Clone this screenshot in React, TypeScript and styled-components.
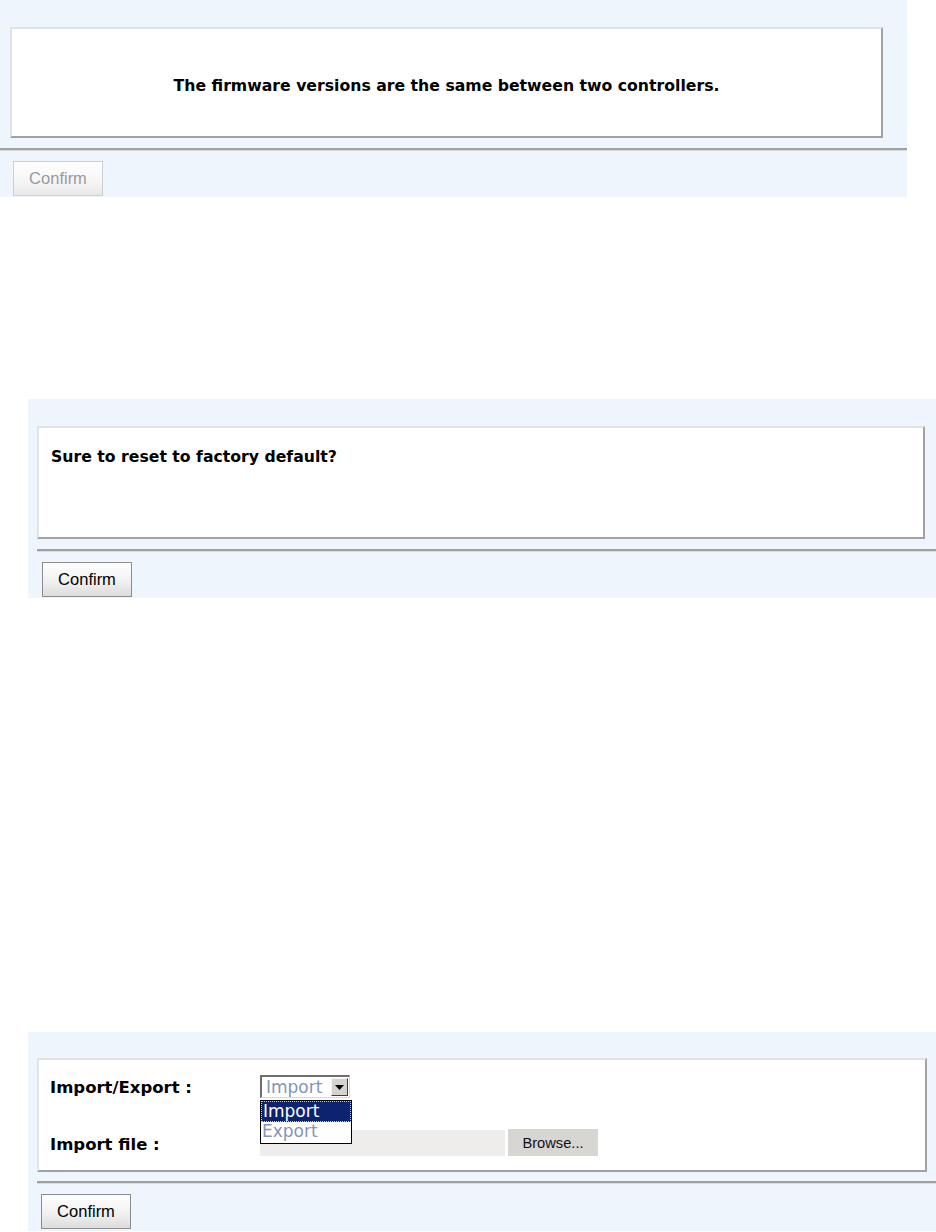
import React from "react";
import styled, { createGlobalStyle } from "styled-components";

const Global = createGlobalStyle`
  html, body { margin: 0; padding: 0; background: #ffffff; }
  body { font-family: "DejaVu Sans", Verdana, sans-serif; }
`;

const Page = styled.div`
  width: 936px;
  height: 1232px;
  overflow: hidden;
  display: flex;
  flex-direction: column;
`;

const Panel = styled.section<{ $top: number; $left: number; $width: number; $height: number }>`
  margin-top: ${(p) => p.$top}px;
  margin-left: ${(p) => p.$left}px;
  width: ${(p) => p.$width}px;
  height: ${(p) => p.$height}px;
  background: #eef5fd;
  display: flex;
  flex-direction: column;
  flex-shrink: 0;
`;

const Box = styled.div<{ $top: number; $left: number; $width: number; $height: number; $center?: boolean }>`
  margin-top: ${(p) => p.$top}px;
  margin-left: ${(p) => p.$left}px;
  width: ${(p) => p.$width}px;
  height: ${(p) => p.$height}px;
  box-sizing: border-box;
  background: #ffffff;
  border-top: 2px solid #e2e2e2;
  border-left: 2px solid #e2e2e2;
  border-right: 2px solid #a2a2a2;
  border-bottom: 2px solid #a2a2a2;
  display: flex;
  flex-direction: column;
  ${(p) => (p.$center ? "align-items: center; justify-content: center;" : "")}
`;

const Message = styled.p<{ $size: number; $pad?: string }>`
  margin: 0;
  padding: ${(p) => p.$pad ?? "0"};
  font-family: "DejaVu Sans", Verdana, sans-serif;
  font-weight: bold;
  font-size: ${(p) => p.$size}px;
  color: #000000;
`;

const Separator = styled.div<{ $top: number; $left: number }>`
  margin-top: ${(p) => p.$top}px;
  margin-left: ${(p) => p.$left}px;
  height: 2px;
  background: #a0a0a0;
  border-bottom: 1px solid #dcdcdc;
`;

const ConfirmButton = styled.button<{ $top: number; $left: number }>`
  margin-top: ${(p) => p.$top}px;
  margin-left: ${(p) => p.$left}px;
  width: 90px;
  height: 35px;
  box-sizing: border-box;
  border: 1px solid #8c8c8c;
  background: linear-gradient(#ffffff, #f1f1f1 55%, #dcdcdc);
  font-family: "Liberation Sans", Arial, sans-serif;
  font-size: 16.5px;
  color: #000000;
  padding: 0;
  &:disabled {
    border-color: #cfcfcf;
    color: #9a9a9a;
    background: linear-gradient(#ffffff, #f6f6f6 55%, #e8e8e8);
  }
`;

const FormGrid = styled.div`
  display: grid;
  grid-template-columns: 210px 1fr;
  padding: 15px 0 0 11px;
`;

const Label = styled.div<{ $top: number }>`
  margin-top: ${(p) => p.$top}px;
  font-family: "DejaVu Sans", Verdana, sans-serif;
  font-weight: bold;
  font-size: 16.5px;
  line-height: 20px;
  color: #000;
  height: 20px;
`;

const Field = styled.div<{ $top: number }>`
  margin-top: ${(p) => p.$top}px;
  position: relative;
  display: flex;
  align-items: center;
`;

const SelectBox = styled.div`
  width: 90px;
  height: 23px;
  box-sizing: border-box;
  border-top: 2px solid #6e6e6e;
  border-left: 2px solid #6e6e6e;
  border-right: 1px solid #d8d8d8;
  border-bottom: 1px solid #d8d8d8;
  background: #fff;
  display: flex;
  align-items: center;
  justify-content: space-between;
  padding-left: 4px;
  font-family: "DejaVu Sans", Verdana, sans-serif;
  font-size: 17px;
  color: #8295b8;
`;

const ArrowButton = styled.span`
  width: 17px;
  height: 18px;
  margin-right: 1px;
  flex-shrink: 0;
  box-sizing: border-box;
  background: #d6d3ce;
  border-top: 1px solid #f4f4f4;
  border-left: 1px solid #f4f4f4;
  border-right: 1px solid #404040;
  border-bottom: 1px solid #404040;
  display: flex;
  align-items: center;
  justify-content: center;
`;

const DropList = styled.ul`
  position: absolute;
  left: 0;
  top: 25px;
  margin: 0;
  padding: 0;
  width: 92px;
  box-sizing: border-box;
  border: 1px solid #000;
  background: #fff;
  list-style: none;
  z-index: 2;
`;

const DropItem = styled.li<{ $active?: boolean }>`
  height: 21px;
  line-height: 19px;
  box-sizing: border-box;
  padding-left: 1px;
  font-family: "DejaVu Sans", Verdana, sans-serif;
  font-size: 17px;
  background: ${(p) => (p.$active ? "#0c2470" : "#ffffff")};
  color: ${(p) => (p.$active ? "#ffffff" : "#8295b8")};
  border: ${(p) => (p.$active ? "1px dotted #c8c8ff" : "none")};
`;

const FileRow = styled.div`
  display: flex;
  align-items: center;
  gap: 3px;
`;

const FileInput = styled.div`
  width: 245px;
  height: 26px;
  background: #efecec;
`;

const BrowseButton = styled.div`
  width: 90px;
  height: 27px;
  background: #d8d6d2;
  display: flex;
  align-items: center;
  justify-content: center;
  font-family: "Liberation Sans", Arial, sans-serif;
  font-size: 14.7px;
  color: #111;
`;

export default function App() {
  return (
    <Page>
      <Global />
      <Panel $top={0} $left={0} $width={907} $height={197}>
        <Box $top={27} $left={10} $width={873} $height={111} $center>
          <Message $size={15.7} $pad="5px 0 0 0">
            The firmware versions are the same between two controllers.
          </Message>
        </Box>
        <Separator $top={10} $left={0} />
        <ConfirmButton $top={10} $left={13} disabled>
          Confirm
        </ConfirmButton>
      </Panel>

      <Panel $top={202} $left={28} $width={908} $height={199}>
        <Box $top={27} $left={9} $width={888} $height={113}>
          <Message $size={15.7} $pad="19px 0 0 12px">
            Sure to reset to factory default?
          </Message>
        </Box>
        <Separator $top={10} $left={9} />
        <ConfirmButton $top={10} $left={14}>Confirm</ConfirmButton>
      </Panel>

      <Panel $top={434} $left={28} $width={908} $height={199}>
        <Box $top={26} $left={9} $width={890} $height={114}>
          <FormGrid>
            <Label $top={3}>Import/Export :</Label>
            <Field $top={0}>
              <SelectBox>
                Import
                <ArrowButton>
                  <svg width="9" height="5" viewBox="0 0 9 5">
                    <path d="M0 0h9L4.5 5z" fill="#000" />
                  </svg>
                </ArrowButton>
              </SelectBox>
              <DropList>
                <DropItem $active>Import</DropItem>
                <DropItem>Export</DropItem>
              </DropList>
            </Field>
            <Label $top={37}>Import file :</Label>
            <Field $top={31}>
              <FileRow>
                <FileInput />
                <BrowseButton>Browse...</BrowseButton>
              </FileRow>
            </Field>
          </FormGrid>
        </Box>
        <Separator $top={9} $left={9} />
        <ConfirmButton $top={10} $left={13}>Confirm</ConfirmButton>
      </Panel>
    </Page>
  );
}
